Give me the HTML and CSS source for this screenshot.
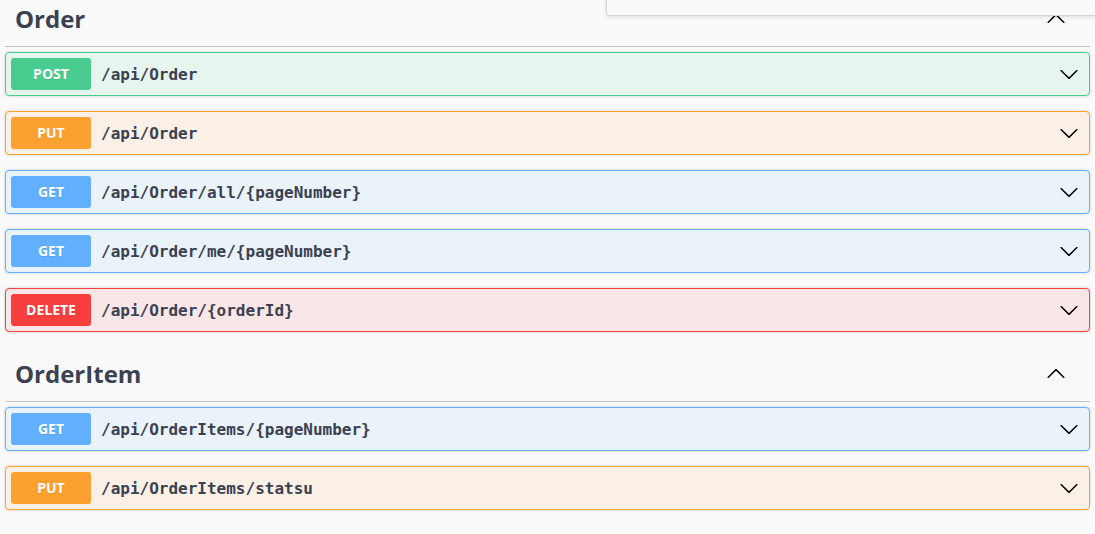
FILE: index.html
```html
<!DOCTYPE html>
<html>
<head>
<meta charset="utf-8">
<link rel="stylesheet" href="styles.css">
</head>
<body>
<div class="page">
  <section class="tag-section">
    <h3 class="tag">
      <span class="tag-name">Order</span>
      <svg class="tag-arrow" viewBox="0 0 20 20" width="20" height="20"><path d="M17.418 13.891c.272.268.709.268.979 0s.271-.701 0-.969l-7.908-7.83c-.27-.268-.707-.268-.979 0l-7.908 7.83c-.27.268-.27.701 0 .969.271.268.709.268.979 0L10 6.75l7.418 7.141z"/></svg>
    </h3>
    <div class="op post">
      <span class="method">POST</span><span class="path">/api/Order</span>
      <svg class="arrow" viewBox="0 0 20 20" width="20" height="20"><path d="M17.418 6.109c.272-.268.709-.268.979 0s.271.701 0 .969l-7.908 7.83c-.27.268-.707.268-.979 0l-7.908-7.83c-.27-.268-.27-.701 0-.969.271-.268.709-.268.979 0L10 13.25l7.418-7.141z"/></svg>
    </div>
    <div class="op put">
      <span class="method">PUT</span><span class="path">/api/Order</span>
      <svg class="arrow" viewBox="0 0 20 20" width="20" height="20"><path d="M17.418 6.109c.272-.268.709-.268.979 0s.271.701 0 .969l-7.908 7.83c-.27.268-.707.268-.979 0l-7.908-7.83c-.27-.268-.27-.701 0-.969.271-.268.709-.268.979 0L10 13.25l7.418-7.141z"/></svg>
    </div>
    <div class="op get">
      <span class="method">GET</span><span class="path">/api/Order/all/{pageNumber}</span>
      <svg class="arrow" viewBox="0 0 20 20" width="20" height="20"><path d="M17.418 6.109c.272-.268.709-.268.979 0s.271.701 0 .969l-7.908 7.83c-.27.268-.707.268-.979 0l-7.908-7.83c-.27-.268-.27-.701 0-.969.271-.268.709-.268.979 0L10 13.25l7.418-7.141z"/></svg>
    </div>
    <div class="op get">
      <span class="method">GET</span><span class="path">/api/Order/me/{pageNumber}</span>
      <svg class="arrow" viewBox="0 0 20 20" width="20" height="20"><path d="M17.418 6.109c.272-.268.709-.268.979 0s.271.701 0 .969l-7.908 7.83c-.27.268-.707.268-.979 0l-7.908-7.83c-.27-.268-.27-.701 0-.969.271-.268.709-.268.979 0L10 13.25l7.418-7.141z"/></svg>
    </div>
    <div class="op delete">
      <span class="method">DELETE</span><span class="path">/api/Order/{orderId}</span>
      <svg class="arrow" viewBox="0 0 20 20" width="20" height="20"><path d="M17.418 6.109c.272-.268.709-.268.979 0s.271.701 0 .969l-7.908 7.83c-.27.268-.707.268-.979 0l-7.908-7.83c-.27-.268-.27-.701 0-.969.271-.268.709-.268.979 0L10 13.25l7.418-7.141z"/></svg>
    </div>
  </section>
  <section class="tag-section">
    <h3 class="tag">
      <span class="tag-name">OrderItem</span>
      <svg class="tag-arrow" viewBox="0 0 20 20" width="20" height="20"><path d="M17.418 13.891c.272.268.709.268.979 0s.271-.701 0-.969l-7.908-7.83c-.27-.268-.707-.268-.979 0l-7.908 7.83c-.27.268-.27.701 0 .969.271.268.709.268.979 0L10 6.75l7.418 7.141z"/></svg>
    </h3>
    <div class="op get">
      <span class="method">GET</span><span class="path">/api/OrderItems/{pageNumber}</span>
      <svg class="arrow" viewBox="0 0 20 20" width="20" height="20"><path d="M17.418 6.109c.272-.268.709-.268.979 0s.271.701 0 .969l-7.908 7.83c-.27.268-.707.268-.979 0l-7.908-7.83c-.27-.268-.27-.701 0-.969.271-.268.709-.268.979 0L10 13.25l7.418-7.141z"/></svg>
    </div>
    <div class="op put">
      <span class="method">PUT</span><span class="path">/api/OrderItems/statsu</span>
      <svg class="arrow" viewBox="0 0 20 20" width="20" height="20"><path d="M17.418 6.109c.272-.268.709-.268.979 0s.271.701 0 .969l-7.908 7.83c-.27.268-.707.268-.979 0l-7.908-7.83c-.27-.268-.27-.701 0-.969.271-.268.709-.268.979 0L10 13.25l7.418-7.141z"/></svg>
    </div>
  </section>
</div>
<div class="popover"></div>
</body>
</html>
```

FILE: styles.css
```css
html, body {
  margin: 0;
  padding: 0;
  background: #fafafa;
}
body {
  font-family: "Open Sans", sans-serif;
  color: #3b4151;
  overflow: hidden;
}
.page {
  margin-top: -8px;
  padding: 0 5px;
}
.tag-section {
  display: flex;
  flex-direction: column;
}
.tag {
  display: flex;
  align-items: center;
  margin: 0 0 5px;
  padding: 10px 20px 10px 10px;
  border-bottom: 1px solid rgba(59, 65, 81, 0.3);
  font-family: "Open Sans", sans-serif;
  font-size: 24px;
  font-weight: 700;
  line-height: 34px;
  color: #3b4151;
}
.tag-name {
  flex: 1;
}
.tag-arrow {
  margin-right: 4px;
  fill: #000;
}
.op {
  display: flex;
  align-items: center;
  padding: 5px;
  margin: 0 0 15px;
  border: 1px solid;
  border-radius: 4px;
  box-shadow: 0 0 3px rgba(0, 0, 0, 0.19);
}
.method {
  min-width: 80px;
  padding: 6px 0;
  border-radius: 3px;
  font-family: "Open Sans", sans-serif;
  font-size: 14px;
  font-weight: 700;
  line-height: 20px;
  text-align: center;
  color: #fff;
  text-shadow: 0 1px 0 rgba(0, 0, 0, 0.1);
}
.path {
  flex: 1;
  padding: 0 10px;
  font-family: "DejaVu Sans Mono", monospace;
  font-size: 16px;
  font-weight: 700;
  color: #3b4151;
}
.arrow {
  margin-right: 5px;
  fill: #000;
}
.post { background: rgba(73, 204, 144, 0.1); border-color: #49cc90; }
.post .method { background: #49cc90; }
.put { background: rgba(252, 161, 48, 0.1); border-color: #fca130; }
.put .method { background: #fca130; }
.get { background: rgba(97, 175, 254, 0.1); border-color: #61affe; }
.get .method { background: #61affe; }
.delete { background: rgba(249, 62, 62, 0.1); border-color: #f93e3e; }
.delete .method { background: #f93e3e; }
.popover {
  position: absolute;
  top: -20px;
  left: 606px;
  width: 520px;
  height: 34px;
  background: #fafafa;
  border: 1px solid #d4d4d4;
  border-radius: 4px;
  box-shadow: 0 1px 4px rgba(0, 0, 0, 0.12);
}
```
